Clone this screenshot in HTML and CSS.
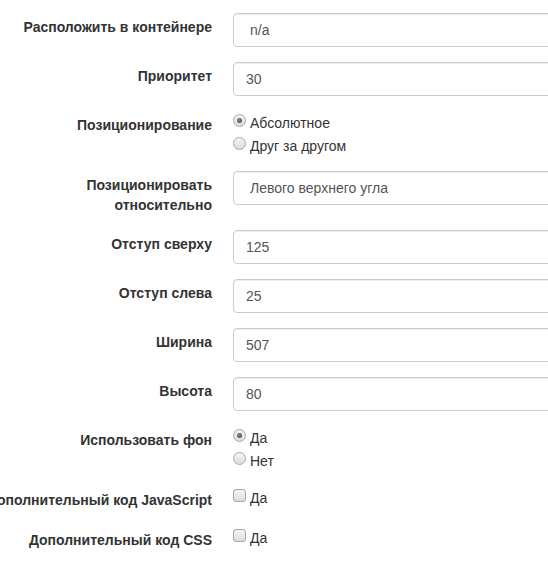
FILE: index.html
```html
<!DOCTYPE html>
<html lang="ru">
<head>
<meta charset="utf-8">
<title>Настройки блока</title>
<link rel="stylesheet" href="styles.css">
</head>
<body>
<form class="form">
  <div class="row">
    <div class="label-col"><label class="label">Расположить в контейнере</label></div>
    <div class="control-col"><select class="control select"><option>n/a</option></select></div>
  </div>
  <div class="row">
    <div class="label-col"><label class="label">Приоритет</label></div>
    <div class="control-col"><input class="control" type="text" value="30"></div>
  </div>
  <div class="row">
    <div class="label-col"><label class="label">Позиционирование</label></div>
    <div class="control-col">
      <label class="radio"><span class="mark round checked"></span>Абсолютное</label>
      <label class="radio"><span class="mark round"></span>Друг за другом</label>
    </div>
  </div>
  <div class="row">
    <div class="label-col"><label class="label">Позиционировать<br>относительно</label></div>
    <div class="control-col"><select class="control select"><option>Левого верхнего угла</option></select></div>
  </div>
  <div class="row">
    <div class="label-col"><label class="label">Отступ сверху</label></div>
    <div class="control-col"><input class="control" type="text" value="125"></div>
  </div>
  <div class="row">
    <div class="label-col"><label class="label">Отступ слева</label></div>
    <div class="control-col"><input class="control" type="text" value="25"></div>
  </div>
  <div class="row">
    <div class="label-col"><label class="label">Ширина</label></div>
    <div class="control-col"><input class="control" type="text" value="507"></div>
  </div>
  <div class="row">
    <div class="label-col"><label class="label">Высота</label></div>
    <div class="control-col"><input class="control" type="text" value="80"></div>
  </div>
  <div class="row">
    <div class="label-col"><label class="label">Использовать фон</label></div>
    <div class="control-col">
      <label class="radio"><span class="mark round checked"></span>Да</label>
      <label class="radio"><span class="mark round"></span>Нет</label>
    </div>
  </div>
  <div class="row">
    <div class="label-col"><label class="label">Дополнительный код JavaScript</label></div>
    <div class="control-col">
      <label class="radio single"><span class="mark square"></span>Да</label>
    </div>
  </div>
  <div class="row">
    <div class="label-col"><label class="label">Дополнительный код CSS</label></div>
    <div class="control-col">
      <label class="radio single"><span class="mark square"></span>Да</label>
    </div>
  </div>
</form>
</body>
</html>
```
FILE: styles.css
```css
html, body {
  margin: 0;
  padding: 0;
  background: #fff;
  overflow: hidden;
}
body {
  font-family: "Liberation Sans", Arial, sans-serif;
  font-size: 14px;
  line-height: 20px;
  color: #333;
}
.form {
  padding-top: 13px;
}
.row {
  display: flex;
  margin-bottom: 15px;
}
.label-col {
  flex: 0 0 212px;
  width: 212px;
  display: flex;
  justify-content: flex-end;
}
.label {
  display: block;
  padding-top: 4px;
  font-weight: bold;
  white-space: nowrap;
  text-align: right;
  color: #333;
}
.control-col {
  flex: 0 0 420px;
  margin-left: 21px;
}
.control {
  display: block;
  box-sizing: border-box;
  width: 100%;
  height: 34px;
  margin: 0;
  padding: 6px 12px;
  font-family: "Liberation Sans", Arial, sans-serif;
  font-size: 14px;
  line-height: 20px;
  color: #555;
  background: #fff;
  border: 1px solid #ccc;
  border-radius: 4px;
  box-shadow: inset 0 1px 1px rgba(0, 0, 0, 0.075);
  outline: none;
}
.select {
  -webkit-appearance: none;
  appearance: none;
  padding-left: 16px;
}
.radio {
  display: block;
  position: relative;
  padding-top: 2px;
  padding-left: 17px;
  line-height: 20px;
  color: #333;
}
.radio + .radio {
  margin-top: 1px;
}
.radio.single {
  min-height: 23px;
}
.mark {
  position: absolute;
  left: 0;
  top: 3px;
  box-sizing: border-box;
  width: 13px;
  height: 13px;
  border: 1px solid #a6a6a6;
  background: linear-gradient(#f4f4f4, #dcdcdc);
}
.mark.round {
  border-radius: 50%;
}
.mark.square {
  border-radius: 3px;
}
.mark.checked::after {
  content: "";
  position: absolute;
  left: 3px;
  top: 3px;
  width: 5px;
  height: 5px;
  border-radius: 50%;
  background: radial-gradient(circle at 40% 40%, #8a8a8a, #3f3f3f);
}
```
